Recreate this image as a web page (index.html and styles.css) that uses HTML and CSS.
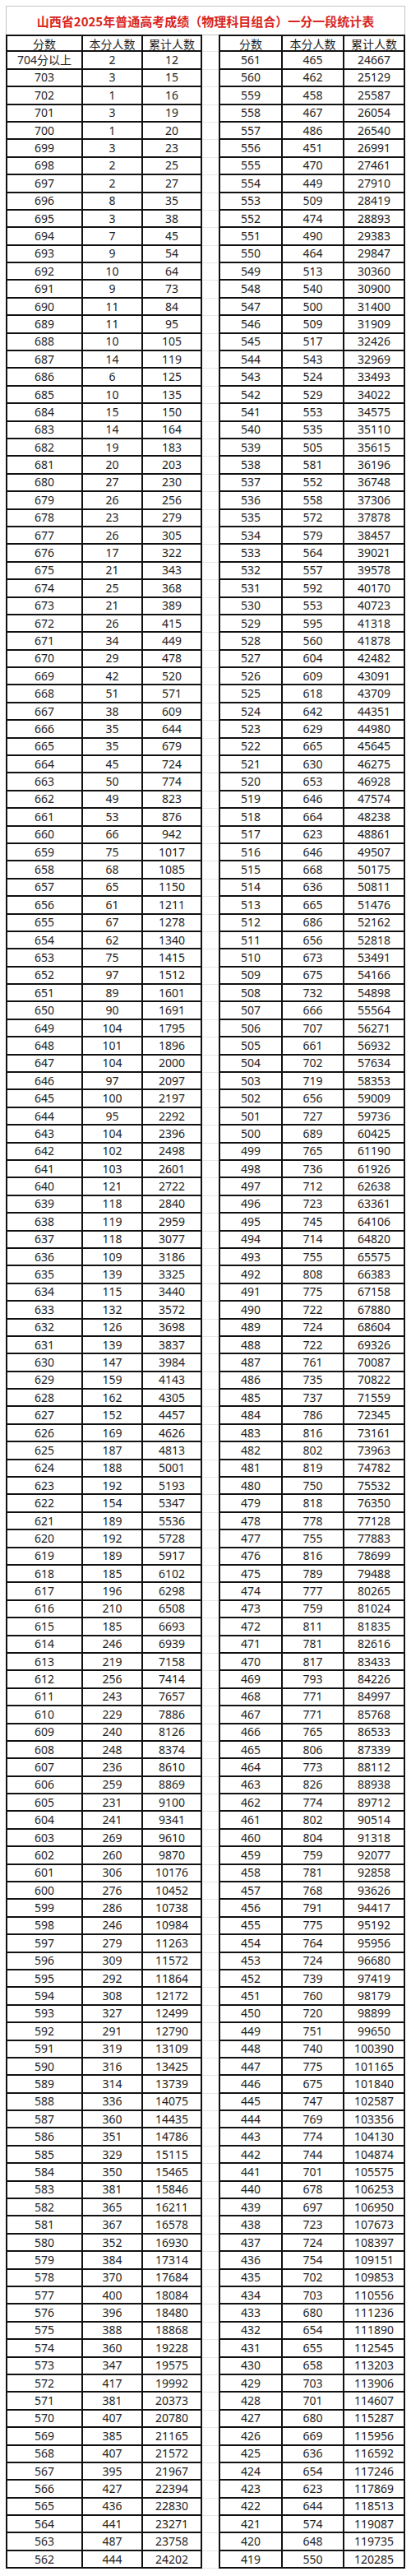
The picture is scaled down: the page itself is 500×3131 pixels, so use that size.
FILE: index.html
```html
<!DOCTYPE html>
<html lang="zh-CN">
<head>
<meta charset="utf-8">
<title>山西省2025年普通高考成绩（物理科目组合）一分一段统计表</title>
<link rel="stylesheet" href="styles.css">
</head>
<body>
<div class="sheet">
<div class="title">山西省2025年普通高考成绩（物理科目组合）一分一段统计表</div>
<div class="r head"><span>分数</span><span>本分人数</span><span>累计人数</span><span class="g"></span><span>分数</span><span>本分人数</span><span>累计人数</span></div>
<div class="r"><span>704分以上</span><span>2</span><span>12</span><span class="g"></span><span>561</span><span>465</span><span>24667</span></div>
<div class="r"><span>703</span><span>3</span><span>15</span><span class="g"></span><span>560</span><span>462</span><span>25129</span></div>
<div class="r"><span>702</span><span>1</span><span>16</span><span class="g"></span><span>559</span><span>458</span><span>25587</span></div>
<div class="r"><span>701</span><span>3</span><span>19</span><span class="g"></span><span>558</span><span>467</span><span>26054</span></div>
<div class="r"><span>700</span><span>1</span><span>20</span><span class="g"></span><span>557</span><span>486</span><span>26540</span></div>
<div class="r"><span>699</span><span>3</span><span>23</span><span class="g"></span><span>556</span><span>451</span><span>26991</span></div>
<div class="r"><span>698</span><span>2</span><span>25</span><span class="g"></span><span>555</span><span>470</span><span>27461</span></div>
<div class="r"><span>697</span><span>2</span><span>27</span><span class="g"></span><span>554</span><span>449</span><span>27910</span></div>
<div class="r"><span>696</span><span>8</span><span>35</span><span class="g"></span><span>553</span><span>509</span><span>28419</span></div>
<div class="r"><span>695</span><span>3</span><span>38</span><span class="g"></span><span>552</span><span>474</span><span>28893</span></div>
<div class="r"><span>694</span><span>7</span><span>45</span><span class="g"></span><span>551</span><span>490</span><span>29383</span></div>
<div class="r"><span>693</span><span>9</span><span>54</span><span class="g"></span><span>550</span><span>464</span><span>29847</span></div>
<div class="r"><span>692</span><span>10</span><span>64</span><span class="g"></span><span>549</span><span>513</span><span>30360</span></div>
<div class="r"><span>691</span><span>9</span><span>73</span><span class="g"></span><span>548</span><span>540</span><span>30900</span></div>
<div class="r"><span>690</span><span>11</span><span>84</span><span class="g"></span><span>547</span><span>500</span><span>31400</span></div>
<div class="r"><span>689</span><span>11</span><span>95</span><span class="g"></span><span>546</span><span>509</span><span>31909</span></div>
<div class="r"><span>688</span><span>10</span><span>105</span><span class="g"></span><span>545</span><span>517</span><span>32426</span></div>
<div class="r"><span>687</span><span>14</span><span>119</span><span class="g"></span><span>544</span><span>543</span><span>32969</span></div>
<div class="r"><span>686</span><span>6</span><span>125</span><span class="g"></span><span>543</span><span>524</span><span>33493</span></div>
<div class="r"><span>685</span><span>10</span><span>135</span><span class="g"></span><span>542</span><span>529</span><span>34022</span></div>
<div class="r"><span>684</span><span>15</span><span>150</span><span class="g"></span><span>541</span><span>553</span><span>34575</span></div>
<div class="r"><span>683</span><span>14</span><span>164</span><span class="g"></span><span>540</span><span>535</span><span>35110</span></div>
<div class="r"><span>682</span><span>19</span><span>183</span><span class="g"></span><span>539</span><span>505</span><span>35615</span></div>
<div class="r"><span>681</span><span>20</span><span>203</span><span class="g"></span><span>538</span><span>581</span><span>36196</span></div>
<div class="r"><span>680</span><span>27</span><span>230</span><span class="g"></span><span>537</span><span>552</span><span>36748</span></div>
<div class="r"><span>679</span><span>26</span><span>256</span><span class="g"></span><span>536</span><span>558</span><span>37306</span></div>
<div class="r"><span>678</span><span>23</span><span>279</span><span class="g"></span><span>535</span><span>572</span><span>37878</span></div>
<div class="r"><span>677</span><span>26</span><span>305</span><span class="g"></span><span>534</span><span>579</span><span>38457</span></div>
<div class="r"><span>676</span><span>17</span><span>322</span><span class="g"></span><span>533</span><span>564</span><span>39021</span></div>
<div class="r"><span>675</span><span>21</span><span>343</span><span class="g"></span><span>532</span><span>557</span><span>39578</span></div>
<div class="r"><span>674</span><span>25</span><span>368</span><span class="g"></span><span>531</span><span>592</span><span>40170</span></div>
<div class="r"><span>673</span><span>21</span><span>389</span><span class="g"></span><span>530</span><span>553</span><span>40723</span></div>
<div class="r"><span>672</span><span>26</span><span>415</span><span class="g"></span><span>529</span><span>595</span><span>41318</span></div>
<div class="r"><span>671</span><span>34</span><span>449</span><span class="g"></span><span>528</span><span>560</span><span>41878</span></div>
<div class="r"><span>670</span><span>29</span><span>478</span><span class="g"></span><span>527</span><span>604</span><span>42482</span></div>
<div class="r"><span>669</span><span>42</span><span>520</span><span class="g"></span><span>526</span><span>609</span><span>43091</span></div>
<div class="r"><span>668</span><span>51</span><span>571</span><span class="g"></span><span>525</span><span>618</span><span>43709</span></div>
<div class="r"><span>667</span><span>38</span><span>609</span><span class="g"></span><span>524</span><span>642</span><span>44351</span></div>
<div class="r"><span>666</span><span>35</span><span>644</span><span class="g"></span><span>523</span><span>629</span><span>44980</span></div>
<div class="r"><span>665</span><span>35</span><span>679</span><span class="g"></span><span>522</span><span>665</span><span>45645</span></div>
<div class="r"><span>664</span><span>45</span><span>724</span><span class="g"></span><span>521</span><span>630</span><span>46275</span></div>
<div class="r"><span>663</span><span>50</span><span>774</span><span class="g"></span><span>520</span><span>653</span><span>46928</span></div>
<div class="r"><span>662</span><span>49</span><span>823</span><span class="g"></span><span>519</span><span>646</span><span>47574</span></div>
<div class="r"><span>661</span><span>53</span><span>876</span><span class="g"></span><span>518</span><span>664</span><span>48238</span></div>
<div class="r"><span>660</span><span>66</span><span>942</span><span class="g"></span><span>517</span><span>623</span><span>48861</span></div>
<div class="r"><span>659</span><span>75</span><span>1017</span><span class="g"></span><span>516</span><span>646</span><span>49507</span></div>
<div class="r"><span>658</span><span>68</span><span>1085</span><span class="g"></span><span>515</span><span>668</span><span>50175</span></div>
<div class="r"><span>657</span><span>65</span><span>1150</span><span class="g"></span><span>514</span><span>636</span><span>50811</span></div>
<div class="r"><span>656</span><span>61</span><span>1211</span><span class="g"></span><span>513</span><span>665</span><span>51476</span></div>
<div class="r"><span>655</span><span>67</span><span>1278</span><span class="g"></span><span>512</span><span>686</span><span>52162</span></div>
<div class="r"><span>654</span><span>62</span><span>1340</span><span class="g"></span><span>511</span><span>656</span><span>52818</span></div>
<div class="r"><span>653</span><span>75</span><span>1415</span><span class="g"></span><span>510</span><span>673</span><span>53491</span></div>
<div class="r"><span>652</span><span>97</span><span>1512</span><span class="g"></span><span>509</span><span>675</span><span>54166</span></div>
<div class="r"><span>651</span><span>89</span><span>1601</span><span class="g"></span><span>508</span><span>732</span><span>54898</span></div>
<div class="r"><span>650</span><span>90</span><span>1691</span><span class="g"></span><span>507</span><span>666</span><span>55564</span></div>
<div class="r"><span>649</span><span>104</span><span>1795</span><span class="g"></span><span>506</span><span>707</span><span>56271</span></div>
<div class="r"><span>648</span><span>101</span><span>1896</span><span class="g"></span><span>505</span><span>661</span><span>56932</span></div>
<div class="r"><span>647</span><span>104</span><span>2000</span><span class="g"></span><span>504</span><span>702</span><span>57634</span></div>
<div class="r"><span>646</span><span>97</span><span>2097</span><span class="g"></span><span>503</span><span>719</span><span>58353</span></div>
<div class="r"><span>645</span><span>100</span><span>2197</span><span class="g"></span><span>502</span><span>656</span><span>59009</span></div>
<div class="r"><span>644</span><span>95</span><span>2292</span><span class="g"></span><span>501</span><span>727</span><span>59736</span></div>
<div class="r"><span>643</span><span>104</span><span>2396</span><span class="g"></span><span>500</span><span>689</span><span>60425</span></div>
<div class="r"><span>642</span><span>102</span><span>2498</span><span class="g"></span><span>499</span><span>765</span><span>61190</span></div>
<div class="r"><span>641</span><span>103</span><span>2601</span><span class="g"></span><span>498</span><span>736</span><span>61926</span></div>
<div class="r"><span>640</span><span>121</span><span>2722</span><span class="g"></span><span>497</span><span>712</span><span>62638</span></div>
<div class="r"><span>639</span><span>118</span><span>2840</span><span class="g"></span><span>496</span><span>723</span><span>63361</span></div>
<div class="r"><span>638</span><span>119</span><span>2959</span><span class="g"></span><span>495</span><span>745</span><span>64106</span></div>
<div class="r"><span>637</span><span>118</span><span>3077</span><span class="g"></span><span>494</span><span>714</span><span>64820</span></div>
<div class="r"><span>636</span><span>109</span><span>3186</span><span class="g"></span><span>493</span><span>755</span><span>65575</span></div>
<div class="r"><span>635</span><span>139</span><span>3325</span><span class="g"></span><span>492</span><span>808</span><span>66383</span></div>
<div class="r"><span>634</span><span>115</span><span>3440</span><span class="g"></span><span>491</span><span>775</span><span>67158</span></div>
<div class="r"><span>633</span><span>132</span><span>3572</span><span class="g"></span><span>490</span><span>722</span><span>67880</span></div>
<div class="r"><span>632</span><span>126</span><span>3698</span><span class="g"></span><span>489</span><span>724</span><span>68604</span></div>
<div class="r"><span>631</span><span>139</span><span>3837</span><span class="g"></span><span>488</span><span>722</span><span>69326</span></div>
<div class="r"><span>630</span><span>147</span><span>3984</span><span class="g"></span><span>487</span><span>761</span><span>70087</span></div>
<div class="r"><span>629</span><span>159</span><span>4143</span><span class="g"></span><span>486</span><span>735</span><span>70822</span></div>
<div class="r"><span>628</span><span>162</span><span>4305</span><span class="g"></span><span>485</span><span>737</span><span>71559</span></div>
<div class="r"><span>627</span><span>152</span><span>4457</span><span class="g"></span><span>484</span><span>786</span><span>72345</span></div>
<div class="r"><span>626</span><span>169</span><span>4626</span><span class="g"></span><span>483</span><span>816</span><span>73161</span></div>
<div class="r"><span>625</span><span>187</span><span>4813</span><span class="g"></span><span>482</span><span>802</span><span>73963</span></div>
<div class="r"><span>624</span><span>188</span><span>5001</span><span class="g"></span><span>481</span><span>819</span><span>74782</span></div>
<div class="r"><span>623</span><span>192</span><span>5193</span><span class="g"></span><span>480</span><span>750</span><span>75532</span></div>
<div class="r"><span>622</span><span>154</span><span>5347</span><span class="g"></span><span>479</span><span>818</span><span>76350</span></div>
<div class="r"><span>621</span><span>189</span><span>5536</span><span class="g"></span><span>478</span><span>778</span><span>77128</span></div>
<div class="r"><span>620</span><span>192</span><span>5728</span><span class="g"></span><span>477</span><span>755</span><span>77883</span></div>
<div class="r"><span>619</span><span>189</span><span>5917</span><span class="g"></span><span>476</span><span>816</span><span>78699</span></div>
<div class="r"><span>618</span><span>185</span><span>6102</span><span class="g"></span><span>475</span><span>789</span><span>79488</span></div>
<div class="r"><span>617</span><span>196</span><span>6298</span><span class="g"></span><span>474</span><span>777</span><span>80265</span></div>
<div class="r"><span>616</span><span>210</span><span>6508</span><span class="g"></span><span>473</span><span>759</span><span>81024</span></div>
<div class="r"><span>615</span><span>185</span><span>6693</span><span class="g"></span><span>472</span><span>811</span><span>81835</span></div>
<div class="r"><span>614</span><span>246</span><span>6939</span><span class="g"></span><span>471</span><span>781</span><span>82616</span></div>
<div class="r"><span>613</span><span>219</span><span>7158</span><span class="g"></span><span>470</span><span>817</span><span>83433</span></div>
<div class="r"><span>612</span><span>256</span><span>7414</span><span class="g"></span><span>469</span><span>793</span><span>84226</span></div>
<div class="r"><span>611</span><span>243</span><span>7657</span><span class="g"></span><span>468</span><span>771</span><span>84997</span></div>
<div class="r"><span>610</span><span>229</span><span>7886</span><span class="g"></span><span>467</span><span>771</span><span>85768</span></div>
<div class="r"><span>609</span><span>240</span><span>8126</span><span class="g"></span><span>466</span><span>765</span><span>86533</span></div>
<div class="r"><span>608</span><span>248</span><span>8374</span><span class="g"></span><span>465</span><span>806</span><span>87339</span></div>
<div class="r"><span>607</span><span>236</span><span>8610</span><span class="g"></span><span>464</span><span>773</span><span>88112</span></div>
<div class="r"><span>606</span><span>259</span><span>8869</span><span class="g"></span><span>463</span><span>826</span><span>88938</span></div>
<div class="r"><span>605</span><span>231</span><span>9100</span><span class="g"></span><span>462</span><span>774</span><span>89712</span></div>
<div class="r"><span>604</span><span>241</span><span>9341</span><span class="g"></span><span>461</span><span>802</span><span>90514</span></div>
<div class="r"><span>603</span><span>269</span><span>9610</span><span class="g"></span><span>460</span><span>804</span><span>91318</span></div>
<div class="r"><span>602</span><span>260</span><span>9870</span><span class="g"></span><span>459</span><span>759</span><span>92077</span></div>
<div class="r"><span>601</span><span>306</span><span>10176</span><span class="g"></span><span>458</span><span>781</span><span>92858</span></div>
<div class="r"><span>600</span><span>276</span><span>10452</span><span class="g"></span><span>457</span><span>768</span><span>93626</span></div>
<div class="r"><span>599</span><span>286</span><span>10738</span><span class="g"></span><span>456</span><span>791</span><span>94417</span></div>
<div class="r"><span>598</span><span>246</span><span>10984</span><span class="g"></span><span>455</span><span>775</span><span>95192</span></div>
<div class="r"><span>597</span><span>279</span><span>11263</span><span class="g"></span><span>454</span><span>764</span><span>95956</span></div>
<div class="r"><span>596</span><span>309</span><span>11572</span><span class="g"></span><span>453</span><span>724</span><span>96680</span></div>
<div class="r"><span>595</span><span>292</span><span>11864</span><span class="g"></span><span>452</span><span>739</span><span>97419</span></div>
<div class="r"><span>594</span><span>308</span><span>12172</span><span class="g"></span><span>451</span><span>760</span><span>98179</span></div>
<div class="r"><span>593</span><span>327</span><span>12499</span><span class="g"></span><span>450</span><span>720</span><span>98899</span></div>
<div class="r"><span>592</span><span>291</span><span>12790</span><span class="g"></span><span>449</span><span>751</span><span>99650</span></div>
<div class="r"><span>591</span><span>319</span><span>13109</span><span class="g"></span><span>448</span><span>740</span><span>100390</span></div>
<div class="r"><span>590</span><span>316</span><span>13425</span><span class="g"></span><span>447</span><span>775</span><span>101165</span></div>
<div class="r"><span>589</span><span>314</span><span>13739</span><span class="g"></span><span>446</span><span>675</span><span>101840</span></div>
<div class="r"><span>588</span><span>336</span><span>14075</span><span class="g"></span><span>445</span><span>747</span><span>102587</span></div>
<div class="r"><span>587</span><span>360</span><span>14435</span><span class="g"></span><span>444</span><span>769</span><span>103356</span></div>
<div class="r"><span>586</span><span>351</span><span>14786</span><span class="g"></span><span>443</span><span>774</span><span>104130</span></div>
<div class="r"><span>585</span><span>329</span><span>15115</span><span class="g"></span><span>442</span><span>744</span><span>104874</span></div>
<div class="r"><span>584</span><span>350</span><span>15465</span><span class="g"></span><span>441</span><span>701</span><span>105575</span></div>
<div class="r"><span>583</span><span>381</span><span>15846</span><span class="g"></span><span>440</span><span>678</span><span>106253</span></div>
<div class="r"><span>582</span><span>365</span><span>16211</span><span class="g"></span><span>439</span><span>697</span><span>106950</span></div>
<div class="r"><span>581</span><span>367</span><span>16578</span><span class="g"></span><span>438</span><span>723</span><span>107673</span></div>
<div class="r"><span>580</span><span>352</span><span>16930</span><span class="g"></span><span>437</span><span>724</span><span>108397</span></div>
<div class="r"><span>579</span><span>384</span><span>17314</span><span class="g"></span><span>436</span><span>754</span><span>109151</span></div>
<div class="r"><span>578</span><span>370</span><span>17684</span><span class="g"></span><span>435</span><span>702</span><span>109853</span></div>
<div class="r"><span>577</span><span>400</span><span>18084</span><span class="g"></span><span>434</span><span>703</span><span>110556</span></div>
<div class="r"><span>576</span><span>396</span><span>18480</span><span class="g"></span><span>433</span><span>680</span><span>111236</span></div>
<div class="r"><span>575</span><span>388</span><span>18868</span><span class="g"></span><span>432</span><span>654</span><span>111890</span></div>
<div class="r"><span>574</span><span>360</span><span>19228</span><span class="g"></span><span>431</span><span>655</span><span>112545</span></div>
<div class="r"><span>573</span><span>347</span><span>19575</span><span class="g"></span><span>430</span><span>658</span><span>113203</span></div>
<div class="r"><span>572</span><span>417</span><span>19992</span><span class="g"></span><span>429</span><span>703</span><span>113906</span></div>
<div class="r"><span>571</span><span>381</span><span>20373</span><span class="g"></span><span>428</span><span>701</span><span>114607</span></div>
<div class="r"><span>570</span><span>407</span><span>20780</span><span class="g"></span><span>427</span><span>680</span><span>115287</span></div>
<div class="r"><span>569</span><span>385</span><span>21165</span><span class="g"></span><span>426</span><span>669</span><span>115956</span></div>
<div class="r"><span>568</span><span>407</span><span>21572</span><span class="g"></span><span>425</span><span>636</span><span>116592</span></div>
<div class="r"><span>567</span><span>395</span><span>21967</span><span class="g"></span><span>424</span><span>654</span><span>117246</span></div>
<div class="r"><span>566</span><span>427</span><span>22394</span><span class="g"></span><span>423</span><span>623</span><span>117869</span></div>
<div class="r"><span>565</span><span>436</span><span>22830</span><span class="g"></span><span>422</span><span>644</span><span>118513</span></div>
<div class="r"><span>564</span><span>441</span><span>23271</span><span class="g"></span><span>421</span><span>574</span><span>119087</span></div>
<div class="r"><span>563</span><span>487</span><span>23758</span><span class="g"></span><span>420</span><span>648</span><span>119735</span></div>
<div class="r"><span>562</span><span>444</span><span>24202</span><span class="g"></span><span>419</span><span>550</span><span>120285</span></div>
</div>
</body>
</html>
```

FILE: styles.css
```css
html, body {
  margin: 0;
  padding: 0;
  background: #ffffff;
}

body {
  font-family: "Noto Sans", "Noto Sans CJK SC", sans-serif;
  color: #1e1e1e;
}

.sheet {
  width: 486px;
  margin: 7px 7px 0 7px;
}

.title {
  box-sizing: border-box;
  height: 35px;
  border: 1px solid #c4c4c4;
  border-bottom: 0;
  display: flex;
  align-items: center;
  justify-content: center;
  font-family: "Noto Sans CJK SC", sans-serif;
  font-weight: 700;
  font-size: 15px;
  color: #d8261e;
  letter-spacing: 0;
}

.r {
  display: grid;
  grid-template-columns: 94px 73px 72px 20px 78px 75px 74px;
  height: 21.4px;
}

.r > span {
  box-sizing: border-box;
  display: flex;
  align-items: center;
  justify-content: center;
  border-right: 2px solid #111111;
  border-bottom: 2px solid #111111;
  font-size: 14px;
  line-height: 1;
  white-space: nowrap;
}

.r > span:nth-child(1),
.r > span:nth-child(5) {
  border-left: 2px solid #111111;
}

.head > span {
  border-top: 2px solid #111111;
  font-family: "Noto Sans CJK SC", sans-serif;
}

.r > .g,
.head > .g {
  border: 0;
  border-bottom: 1px solid #e6e6e6;
}

.head > .g {
  border-top: 1px solid #c4c4c4;
}
```
